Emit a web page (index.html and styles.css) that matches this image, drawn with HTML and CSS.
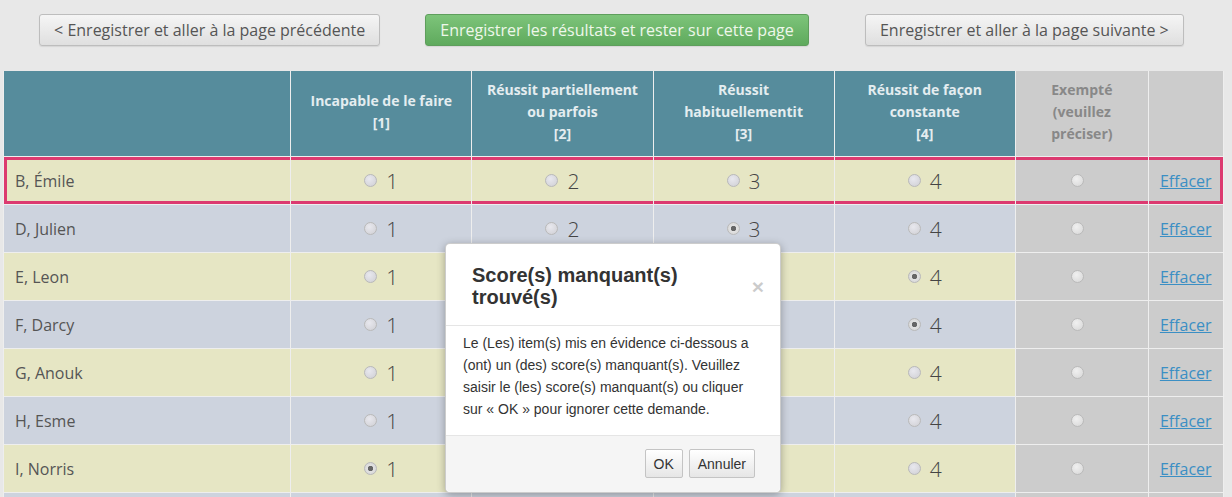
FILE: index.html
```html
<!DOCTYPE html>
<html lang="fr">
<head>
  <meta charset="UTF-8" />
  <meta name="viewport" content="width=device-width, initial-scale=1.0" />
  <title>Saisie des scores</title>
  <link rel="stylesheet" href="styles.css">
</head>
<body>
  <div class="actions">
    <button class="btn">&lt; Enregistrer et aller à la page précédente</button>
    <button class="btn btn-green">Enregistrer les résultats et rester sur cette page</button>
    <button class="btn">Enregistrer et aller à la page suivante &gt;</button>
  </div>

  <table class="scores">
    <colgroup>
      <col class="c-name"><col class="c-score"><col class="c-score"><col class="c-score"><col class="c-score"><col class="c-exempt"><col class="c-clear">
    </colgroup>
    <thead>
      <tr>
        <th></th>
        <th>Incapable de le faire<br>[1]</th>
        <th>Réussit partiellement ou parfois<br>[2]</th>
        <th>Réussit habituellementit<br>[3]</th>
        <th>Réussit de façon constante<br>[4]</th>
        <th class="exempt">Exempté (veuillez préciser)</th>
        <th class="exempt"></th>
      </tr>
    </thead>
    <tbody>
      <tr class="odd missing">
        <td class="name">B, Émile</td>
        <td><label class="score"><input type="radio" name="b">1</label></td>
        <td><label class="score"><input type="radio" name="b">2</label></td>
        <td><label class="score"><input type="radio" name="b">3</label></td>
        <td><label class="score"><input type="radio" name="b">4</label></td>
        <td class="exempt"><label class="score"><input type="radio" name="b"></label></td>
        <td class="exempt clear"><a href="#">Effacer</a></td>
      </tr>
      <tr class="even">
        <td class="name">D, Julien</td>
        <td><label class="score"><input type="radio" name="d">1</label></td>
        <td><label class="score"><input type="radio" name="d">2</label></td>
        <td><label class="score"><input type="radio" name="d" checked>3</label></td>
        <td><label class="score"><input type="radio" name="d">4</label></td>
        <td class="exempt"><label class="score"><input type="radio" name="d"></label></td>
        <td class="exempt clear"><a href="#">Effacer</a></td>
      </tr>
      <tr class="odd">
        <td class="name">E, Leon</td>
        <td><label class="score"><input type="radio" name="e">1</label></td>
        <td><label class="score"><input type="radio" name="e">2</label></td>
        <td><label class="score"><input type="radio" name="e">3</label></td>
        <td><label class="score"><input type="radio" name="e" checked>4</label></td>
        <td class="exempt"><label class="score"><input type="radio" name="e"></label></td>
        <td class="exempt clear"><a href="#">Effacer</a></td>
      </tr>
      <tr class="even">
        <td class="name">F, Darcy</td>
        <td><label class="score"><input type="radio" name="f">1</label></td>
        <td><label class="score"><input type="radio" name="f">2</label></td>
        <td><label class="score"><input type="radio" name="f">3</label></td>
        <td><label class="score"><input type="radio" name="f" checked>4</label></td>
        <td class="exempt"><label class="score"><input type="radio" name="f"></label></td>
        <td class="exempt clear"><a href="#">Effacer</a></td>
      </tr>
      <tr class="odd">
        <td class="name">G, Anouk</td>
        <td><label class="score"><input type="radio" name="g">1</label></td>
        <td><label class="score"><input type="radio" name="g">2</label></td>
        <td><label class="score"><input type="radio" name="g">3</label></td>
        <td><label class="score"><input type="radio" name="g">4</label></td>
        <td class="exempt"><label class="score"><input type="radio" name="g"></label></td>
        <td class="exempt clear"><a href="#">Effacer</a></td>
      </tr>
      <tr class="even">
        <td class="name">H, Esme</td>
        <td><label class="score"><input type="radio" name="h">1</label></td>
        <td><label class="score"><input type="radio" name="h">2</label></td>
        <td><label class="score"><input type="radio" name="h">3</label></td>
        <td><label class="score"><input type="radio" name="h">4</label></td>
        <td class="exempt"><label class="score"><input type="radio" name="h"></label></td>
        <td class="exempt clear"><a href="#">Effacer</a></td>
      </tr>
      <tr class="odd">
        <td class="name">I, Norris</td>
        <td><label class="score"><input type="radio" name="i" checked>1</label></td>
        <td><label class="score"><input type="radio" name="i">2</label></td>
        <td><label class="score"><input type="radio" name="i">3</label></td>
        <td><label class="score"><input type="radio" name="i">4</label></td>
        <td class="exempt"><label class="score"><input type="radio" name="i"></label></td>
        <td class="exempt clear"><a href="#">Effacer</a></td>
      </tr>
      <tr class="even">
        <td class="name">J, Olivia</td>
        <td><label class="score"><input type="radio" name="j">1</label></td>
        <td><label class="score"><input type="radio" name="j">2</label></td>
        <td><label class="score"><input type="radio" name="j">3</label></td>
        <td><label class="score"><input type="radio" name="j">4</label></td>
        <td class="exempt"><label class="score"><input type="radio" name="j"></label></td>
        <td class="exempt clear"><a href="#">Effacer</a></td>
      </tr>
    </tbody>
  </table>

  <div class="modal">
    <div class="modal-header">
      <h4>Score(s) manquant(s) trouvé(s)</h4>
      <span class="close">×</span>
    </div>
    <div class="modal-body">
      <p>Le (Les) item(s) mis en évidence ci-dessous a (ont) un (des) score(s) manquant(s). Veuillez saisir le (les) score(s) manquant(s) ou cliquer sur « OK » pour ignorer cette demande.</p>
    </div>
    <div class="modal-footer">
      <button class="mbtn">OK</button>
      <button class="mbtn">Annuler</button>
    </div>
  </div>
</body>
</html>
```

FILE: styles.css
```css
body {
  margin: 0;
  position: relative;
  background: #e8e8e8;
  font-family: 'Open Sans', sans-serif;
  color: #555;
}
.actions {
  display: grid;
  grid-template-columns: 1fr 1fr 1fr;
  justify-items: center;
  padding: 14px 4px 0 6px;
  margin-bottom: 25px;
}
.btn {
  height: 32px;
  padding: 0 14px;
  font-family: 'Open Sans', sans-serif;
  font-size: 16px;
  color: #555;
  background: linear-gradient(#f5f5f5, #dfdfdf);
  border: 1px solid #bdbdbd;
  border-radius: 3px;
  box-shadow: 0 1px 1px rgba(0,0,0,0.08);
  cursor: pointer;
}
.btn-green {
  color: #eef7ea;
  background: linear-gradient(#7dc47a, #5faa5d);
  border-color: #5e9e5c;
}
.scores {
  margin-left: 3px;
  width: 1221px;
  table-layout: fixed;
  border-collapse: collapse;
}
.c-name { width: 287px; }
.c-score { width: 181px; }
.c-exempt { width: 133px; }
.c-clear { width: 75px; }
.scores th, .scores td {
  border: 1px solid #eeeeee;
}
.scores th {
  height: 81px;
  padding: 0 12px 4px;
  background: #568c9c;
  color: #e4edf0;
  font-size: 14px;
  font-weight: 700;
  line-height: 22px;
  text-align: center;
  vertical-align: middle;
  border-top: none;
}
.scores th.exempt {
  background: #cccccc;
  color: #888;
}
.scores td {
  height: 47px;
  padding: 0;
  text-align: center;
  vertical-align: middle;
}
.odd td { background: #e6e6c4; }
.even td { background: #cdd3de; }
.scores td.exempt { background: #cccccc; }
.scores td.name {
  text-align: left;
  padding-left: 11px;
  font-size: 16px;
  color: #555;
}
.score {
  display: inline-flex;
  align-items: center;
  font-size: 21px;
  font-weight: 300;
  color: #444;
}
.score input {
  appearance: none;
  -webkit-appearance: none;
  box-sizing: border-box;
  width: 13px;
  height: 13px;
  margin: 0 9px 0 0;
  border: 1px solid #b9b9b9;
  border-radius: 50%;
  background: radial-gradient(circle at 40% 35%, #e8e8ee, #cfcfd4);
}
.score input:checked {
  background: radial-gradient(circle, #666 0 2.4px, #e2e2e2 3px, #d2d2d2);
}
.exempt .score input {
  background: radial-gradient(circle at 40% 35%, #f0f0f0, #d6d6d6);
}
.scores td.clear {
  text-align: left;
  padding-left: 11px;
}
.clear a {
  font-size: 16px;
  color: #3b8fc4;
}
.missing td {
  box-shadow: inset 0 3px 0 #dc3a70, inset 0 -3px 0 #dc3a70;
}
.missing td:first-child {
  box-shadow: inset 0 3px 0 #dc3a70, inset 0 -3px 0 #dc3a70, inset 3px 0 0 #dc3a70;
}
.missing td:last-child {
  box-shadow: inset 0 3px 0 #dc3a70, inset 0 -3px 0 #dc3a70, inset -3px 0 0 #dc3a70;
}

/* modal */
.modal {
  position: absolute;
  left: 445px;
  top: 243px;
  width: 334px;
  background: #fff;
  border: 1px solid rgba(0,0,0,0.2);
  border-radius: 5px;
  box-shadow: 0 2px 8px rgba(0,0,0,0.3);
  font-family: 'Liberation Sans', Arial, sans-serif;
  color: #333;
}
.modal-header {
  display: flex;
  align-items: center;
  justify-content: space-between;
  padding: 20px 16px 17px 26px;
  border-bottom: 1px solid #e5e5e5;
}
.modal-header h4 {
  margin: 0;
  width: 240px;
  font-size: 20px;
  line-height: 22px;
  font-weight: 700;
  color: #333;
}
.close {
  font-size: 21px;
  font-weight: 700;
  line-height: 1;
  color: #000;
  opacity: 0.2;
}
.modal-body {
  padding: 6px 16px 15px 17px;
}
.modal-body p {
  margin: 0;
  font-size: 14px;
  line-height: 22px;
}
.modal-footer {
  display: flex;
  justify-content: flex-end;
  gap: 6px;
  padding: 13px 25px 14px;
  background: #f5f5f5;
  border-top: 1px solid #e5e5e5;
  border-radius: 0 0 5px 5px;
}
.mbtn {
  height: 29px;
  padding: 0 8px;
  font-family: 'Liberation Sans', Arial, sans-serif;
  font-size: 14px;
  color: #333;
  background: linear-gradient(#ffffff, #e6e6e6);
  border: 1px solid #c4c4c4;
  border-radius: 2px;
  cursor: pointer;
}
```
